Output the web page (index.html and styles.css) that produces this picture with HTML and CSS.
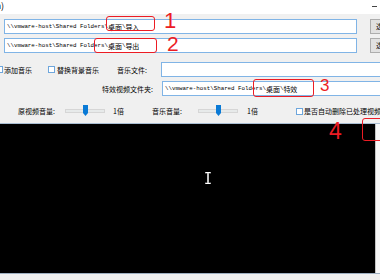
FILE: index.html
```html
<!DOCTYPE html>
<html lang="zh">
<head>
    <meta charset="UTF-8">
    <title>视频处理</title>
    <link rel="stylesheet" href="styles.css">
</head>
<body>

<div class="titlebar">
    <span class="title-glyph">a)</span>
    <span class="min"></span>
</div>

<div class="panel">
    <div class="row row1">
        <div class="field field-wide"><span class="lat">\\vmware-host\Shared Folders\</span><span class="cjk">桌面</span><span class="lat">\</span><span class="cjk">导入</span></div>
        <div class="btn">选择</div>
    </div>
    <div class="row row2">
        <div class="field field-wide"><span class="lat">\\vmware-host\Shared Folders\</span><span class="cjk">桌面</span><span class="lat">\</span><span class="cjk">导出</span></div>
        <div class="btn">选择</div>
    </div>
    <div class="row row3">
        <span class="check first"></span><span class="lbl lbl-add">添加音乐</span>
        <span class="check check2"></span><span class="lbl lbl-bg">替换背景音乐</span>
        <span class="lbl lbl-file">音乐文件:</span>
        <div class="field field-rest"></div>
    </div>
    <div class="row row4">
        <span class="lbl lbl-fx">特效视频文件夹:</span>
        <div class="field field-rest"><span class="lat">\\vmware-host\Shared Folders\</span><span class="cjk">桌面</span><span class="lat">\</span><span class="cjk">特效</span></div>
    </div>
    <div class="row row5">
        <span class="lbl vol-src">原视频音量:</span>
        <svg class="slider" width="40" height="16" viewBox="0 0 40 16">
            <rect x="0.5" y="6.5" width="39" height="3" fill="#e7eaea" stroke="#d6d6d6"/>
            <path d="M18 2h5v8l-2.5 3l-2.5-3z" fill="#0a7ad6"/>
        </svg>
        <span class="lbl times1">1倍</span>
        <span class="lbl vol-music">音乐音量:</span>
        <svg class="slider" width="40" height="16" viewBox="0 0 40 16">
            <rect x="0.5" y="6.5" width="39" height="3" fill="#e7eaea" stroke="#d6d6d6"/>
            <path d="M18 2h5v8l-2.5 3l-2.5-3z" fill="#0a7ad6"/>
        </svg>
        <span class="lbl times2">1倍</span>
        <span class="check"></span><span class="lbl lbl-del">是否自动删除已处理视频</span>
    </div>
</div>

<div class="screen">
    <div class="video"></div>
    <div class="scroll"></div>
</div>
<div class="status"></div>

<!-- red annotations drawn over the screenshot -->
<div class="mark box1"></div>
<div class="num n1">1</div>
<div class="mark box2"></div>
<div class="num n2">2</div>
<div class="mark box3"></div>
<div class="num n3">3</div>
<div class="mark box4"></div>
<div class="num n4">4</div>

<svg class="ibeam" width="8" height="12" viewBox="0 0 8 12">
    <path d="M1 0.5h6M4 0.5v11M1 11.5h6" stroke="#888" stroke-width="2"/>
    <path d="M1.5 0.5h5M4 0.5v11M1.5 11.5h5" stroke="#fff" stroke-width="1"/>
</svg>

</body>
</html>
```

FILE: styles.css
```css
/* Window frame */
body {
    margin: 0;
    width: 380px;
    height: 280px;
    overflow: hidden;
    position: relative;
    background: #f0f0f0;
    color: #000;
    font-family: "Noto Sans CJK SC", sans-serif;
    font-size: 7px;
}
.titlebar {
    height: 14px;
    background: #fff;
    display: flex;
    justify-content: space-between;
    align-items: flex-start;
}
.title-glyph {
    font-size: 9px;
    line-height: 12px;
    margin-left: -4px;
}
.min {
    width: 5px;
    height: 1px;
    background: #444;
    margin: 6px 3px 0 0;
}

/* Settings panel */
.panel {
    height: 110px;
    box-sizing: border-box;
    padding: 5px 0 0 4px;
    border-bottom: 1px solid #a9bdd2;
}
.row {
    display: flex;
    align-items: center;
    height: 15px;
    white-space: nowrap;
}
.row2 { margin-top: 4px; }
.row3 { margin-top: 9px; }
.row4 { margin-top: 4px; }
.row5 { margin-top: 7px; height: 16px; }

.field {
    height: 15px;
    box-sizing: border-box;
    border: 1px solid #80b4e6;
    background: #fff;
    display: flex;
    align-items: center;
    padding-left: 2px;
    overflow: hidden;
    flex-shrink: 0;
}
.field-wide { width: 353px; }
.field-rest { width: 230px; }
.lat {
    font-family: "Liberation Mono", monospace;
    font-size: 5.8px;
}
.cjk { font-size: 7px; }

.btn {
    flex-shrink: 0;
    width: 30px;
    height: 15px;
    box-sizing: border-box;
    margin-left: 13px;
    padding-left: 5px;
    border: 1px solid #adadad;
    background: #e1e1e1;
    line-height: 13px;
}

.check {
    flex-shrink: 0;
    width: 7px;
    height: 7px;
    box-sizing: border-box;
    border: 1px solid #6ea6dc;
    background: #fff;
}
.check.first { margin-left: -8px; }
.check2 { margin-left: 16px; }
.lbl { flex-shrink: 0; }
.lbl-add { margin-left: 1px; }
.lbl-bg { margin-left: 2px; }
.lbl-file {
    margin-left: 18px;
    width: 44px;
}
.lbl-fx {
    width: 158px;
    box-sizing: border-box;
    padding-right: 9px;
    text-align: right;
}
.vol-src {
    margin-left: 14px;
    width: 47px;
}
.slider { flex-shrink: 0; }
.times1 {
    margin-left: 8px;
    width: 39px;
}
.vol-music { width: 46px; }
.times2 {
    margin-left: 9px;
    width: 49px;
}
.lbl-del { margin-left: 1px; }

/* Preview area */
.screen {
    display: flex;
    height: 149px;
}
.video {
    flex: 1;
    background: #000;
}
.scroll {
    width: 4px;
    border-left: 1px solid #c4c4c4;
    background: #f7f7f7;
}
.status {
    height: 6px;
    border-top: 1px solid #9fb0c2;
    background: #f0f0f0;
}

/* Red annotations */
.mark {
    position: absolute;
    border: 1.5px solid #ec1c24;
    border-radius: 3px;
    box-sizing: border-box;
}
.box1 { left: 106px; top: 16px; width: 49px; height: 15px; }
.box2 { left: 94px; top: 38px; width: 63px; height: 15px; }
.box3 { left: 253px; top: 79px; width: 61px; height: 18px; }
.box4 { left: 362px; top: 118px; width: 30px; height: 23px; }
.num {
    position: absolute;
    color: #ec1c24;
    font-family: "Liberation Sans", Arial, sans-serif;
    line-height: 1;
}
.n1 { left: 164px; top: 10px; font-size: 22px; }
.n2 { left: 167px; top: 33px; font-size: 21px; }
.n3 { left: 320px; top: 77px; font-size: 17px; }
.n4 { left: 329px; top: 120px; font-size: 23px; }

.ibeam {
    position: absolute;
    left: 204px;
    top: 172px;
}
```
